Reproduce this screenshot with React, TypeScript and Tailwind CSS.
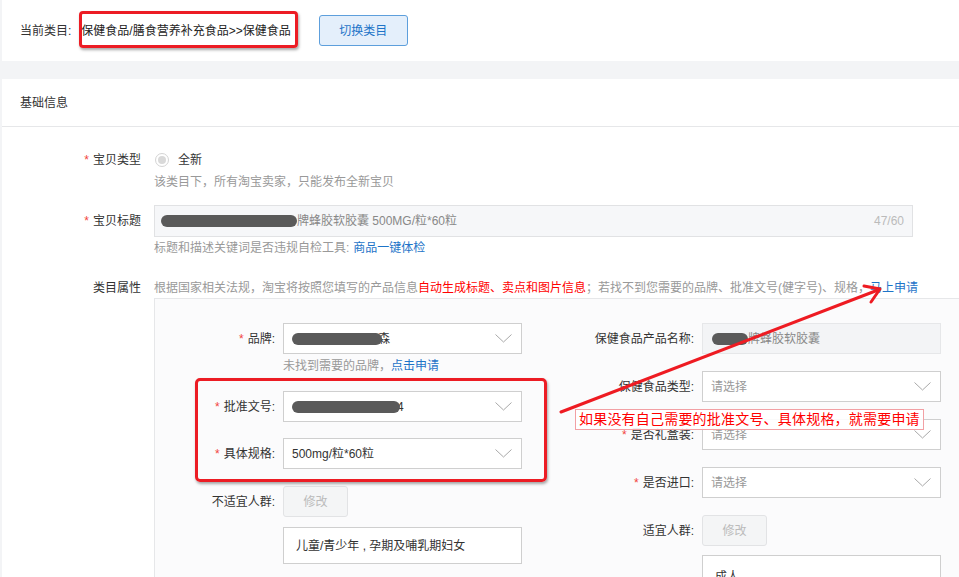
import React from "react";

const font = { fontFamily: '"Liberation Sans", "Noto Sans CJK SC", sans-serif' };

function Chevron() {
  return (
    <svg width="17" height="9" viewBox="0 0 17 9" className="shrink-0">
      <polyline points="0.5,0.5 8.5,8 16.5,0.5" fill="none" stroke="#a8a8a8" strokeWidth="1" />
    </svg>
  );
}

function Blob({ w }: { w: number }) {
  return <span className="inline-block h-[12px] rounded-full bg-[#5a5a5a] blur-[0.6px] shrink-0" style={{ width: w }} />;
}

function Select({ children, placeholder }: { children?: React.ReactNode; placeholder?: string }) {
  return (
    <div className="w-[239px] h-[31px] bg-white border border-[#cfcfcf] flex items-center pl-[8px] pr-[9px] shrink-0">
      <div className="flex-1 flex items-center text-[12px] text-[#333] overflow-hidden whitespace-nowrap">
        {placeholder ? <span className="text-[#999]">{placeholder}</span> : children}
      </div>
      <Chevron />
    </div>
  );
}

function Label({ text, req, w }: { text: string; req?: boolean; w: number }) {
  return (
    <div className="text-right text-[12px] text-[#333] shrink-0 pr-[8px] whitespace-nowrap" style={{ width: w }}>
      {req && <span className="text-[#f2453d] mr-[4px]">*</span>}
      {text}
    </div>
  );
}

function DisabledBtn() {
  return (
    <div className="w-[65px] h-[31px] rounded-[3px] bg-[#f4f5f6] border border-[#e2e3e5] text-[#bbb] text-[12px] flex items-center justify-center shrink-0">
      修改
    </div>
  );
}

export default function App() {
  return (
    <div className="relative w-[959px] h-[577px] overflow-hidden bg-[#f3f4f6]" style={font}>
      {/* top panel */}
      <div className="ml-[2px] h-[61px] bg-white flex items-center pl-[18px]">
        <span className="text-[12px] text-[#333]">当前类目:</span>
        <span className="ml-[10px] text-[12px] text-[#222] whitespace-nowrap">保健食品/膳食营养补充食品&gt;&gt;保健食品</span>
        <div className="ml-[28px] w-[89px] h-[31px] rounded-[3px] border border-[#5d9fdc] bg-[#e4effb] text-[#1e74c8] text-[12px] flex items-center justify-center">
          切换类目
        </div>
      </div>

      {/* main panel */}
      <div className="ml-[2px] mt-[18px] bg-white h-[600px]">
        <div className="h-[48px] border-b border-[#e6e7e9] flex items-center pl-[18px] text-[12px] text-[#333]">基础信息</div>

        <div className="pt-[23px]">
          {/* 宝贝类型 */}
          <div className="flex">
            <div className="w-[152px] shrink-0 flex justify-end pr-[13px] h-[20px] items-center">
              <span className="text-[#f2453d] text-[12px] mr-[4px]">*</span>
              <span className="text-[12px] text-[#333]">宝贝类型</span>
            </div>
            <div className="flex flex-col">
              <div className="h-[20px] flex items-center">
                <span className="w-[14px] h-[14px] rounded-full border border-[#d4d4d4] bg-white flex items-center justify-center ml-[1px]">
                  <span className="w-[8px] h-[8px] rounded-full bg-[#d9d9d9]" />
                </span>
                <span className="ml-[9px] text-[12px] text-[#333]">全新</span>
              </div>
              <div className="h-[20px] mt-[2px] flex items-center text-[12px] text-[#999]">该类目下，所有淘宝卖家，只能发布全新宝贝</div>
            </div>
          </div>

          {/* 宝贝标题 */}
          <div className="flex mt-[13px] items-start">
            <div className="w-[152px] shrink-0 flex justify-end pr-[13px] h-[32px] items-center">
              <span className="text-[#f2453d] text-[12px] mr-[4px]">*</span>
              <span className="text-[12px] text-[#333]">宝贝标题</span>
            </div>
            <div className="flex flex-col">
              <div className="w-[759px] h-[32px] bg-[#f6f7f9] border border-[#e1e2e4] flex items-center pl-[6px] pr-[8px]">
                <Blob w={136} />
                <span className="text-[12px] text-[#888] whitespace-nowrap">牌蜂胶软胶囊 500MG/粒*60粒</span>
                <span className="ml-auto text-[12px] text-[#bbb]">47/60</span>
              </div>
              <div className="h-[20px] mt-[1px] flex items-center text-[12px] text-[#999]">
                标题和描述关键词是否违规自检工具:
                <span className="ml-[4px] text-[#1e74c8]">商品一键体检</span>
              </div>
            </div>
          </div>

          {/* 类目属性 */}
          <div className="flex mt-[20px] items-start">
            <div className="w-[152px] shrink-0 flex justify-end pr-[13px] h-[20px] items-center">
              <span className="text-[12px] text-[#333]">类目属性</span>
            </div>
            <div className="flex flex-col shrink-0">
              <div className="h-[20px] flex items-center text-[12px] text-[#999] whitespace-nowrap">
                根据国家相关法规，淘宝将按照您填写的产品信息
                <span className="text-[#f00]">自动生成标题、卖点和图片信息</span>
                ；若找不到您需要的品牌、批准文号(健字号)、规格，
                <span className="text-[#1e74c8]">马上申请</span>
              </div>
              <div className="w-[820px] h-[300px] bg-[#fbfbfc] border border-[#e6e7e9] flex pt-[24px]">
                {/* left col */}
                <div className="flex flex-col w-[367px] shrink-0">
                  <div className="flex items-center">
                    <Label text="品牌:" req w={128} />
                    <Select>
                      <Blob w={90} />
                      <span className="-ml-[4px] text-[#333]">森</span>
                    </Select>
                  </div>
                  <div className="ml-[128px] h-[20px] mt-[2px] flex items-center text-[12px] text-[#999]">
                    未找到需要的品牌，<span className="text-[#1e74c8]">点击申请</span>
                  </div>
                  <div className="flex items-center mt-[15px]">
                    <Label text="批准文号:" req w={128} />
                    <Select>
                      <Blob w={108} />
                      <span className="-ml-[3px] text-[#333]">4</span>
                    </Select>
                  </div>
                  <div className="flex items-center mt-[16px]">
                    <Label text="具体规格:" req w={128} />
                    <Select>500mg/粒*60粒</Select>
                  </div>
                  <div className="flex items-center mt-[17px]">
                    <Label text="不适宜人群:" w={128} />
                    <DisabledBtn />
                  </div>
                  <div className="ml-[128px] mt-[10px] w-[239px] h-[37px] bg-white border border-[#cfcfcf] flex items-center pl-[12px] text-[12px] text-[#333]">
                    儿童/青少年 , 孕期及哺乳期妇女
                  </div>
                </div>
                {/* right col */}
                <div className="flex flex-col shrink-0">
                  <div className="flex items-center">
                    <Label text="保健食品产品名称:" w={180} />
                    <div className="w-[239px] h-[31px] bg-[#f3f4f6] border border-[#e6e7e9] flex items-center pl-[9px] text-[12px] shrink-0">
                      <Blob w={36} />
                      <span className="text-[#888]">牌蜂胶软胶囊</span>
                    </div>
                  </div>
                  <div className="flex items-center mt-[17px]">
                    <Label text="保健食品类型:" w={180} />
                    <Select placeholder="请选择" />
                  </div>
                  <div className="flex items-center mt-[17px]">
                    <Label text="是否礼盒装:" req w={180} />
                    <Select placeholder="请选择" />
                  </div>
                  <div className="flex items-center mt-[17px]">
                    <Label text="是否进口:" req w={180} />
                    <Select placeholder="请选择" />
                  </div>
                  <div className="flex items-center mt-[17px]">
                    <Label text="适宜人群:" w={180} />
                    <DisabledBtn />
                  </div>
                  <div className="ml-[180px] mt-[9px] w-[239px] h-[37px] bg-white border border-[#cfcfcf] flex items-start pt-[12px] pl-[12px] text-[12px] text-[#333]">
                    成人
                  </div>
                </div>
              </div>
            </div>
          </div>
        </div>
      </div>

      {/* annotations */}
      <div className="absolute left-[79px] top-[11px] w-[219px] h-[37px] border-[3px] border-[#ec1c24] rounded-[4px] shadow-[1px_2px_3px_rgba(0,0,0,0.35)]" />
      <div className="absolute left-[195px] top-[378px] w-[352px] h-[104px] border-[3px] border-[#ec1c24] rounded-[5px] shadow-[1px_2px_3px_rgba(0,0,0,0.35)]" />
      <svg className="absolute left-0 top-0 pointer-events-none" width="959" height="577">
        <line x1="561" y1="412" x2="878" y2="290" stroke="#ee1b22" strokeWidth="3" strokeLinecap="round" />
        <polyline points="864,286 880,289 871,302" fill="none" stroke="#ee1b22" strokeWidth="3" strokeLinecap="round" strokeLinejoin="round" />
      </svg>
      <div className="absolute left-[575px] top-[409px] h-[21px] px-[3px] border border-[#f2a0a4] bg-white/90 text-[#f00] text-[14px] leading-[19px] tracking-[0.2px] whitespace-nowrap">
        如果没有自己需要的批准文号、具体规格，就需要申请
      </div>
    </div>
  );
}
